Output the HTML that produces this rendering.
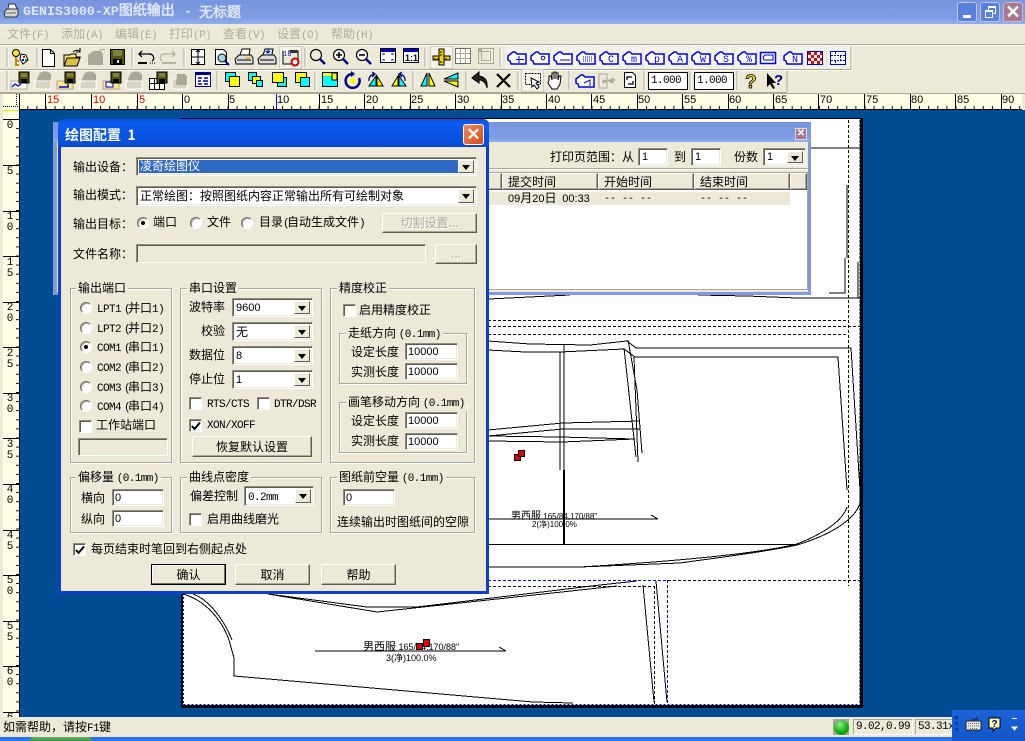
<!DOCTYPE html>
<html><head><meta charset="utf-8">
<style>
html,body{margin:0;padding:0;width:1025px;height:741px;overflow:hidden;background:#ece9d8}
*{box-sizing:border-box}
body{position:relative;font:12px/14px "WenQuanYi Zen Hei","Noto Sans CJK SC",sans-serif;color:#000}
div,span.t,svg.abs{position:absolute}
.t{position:absolute;white-space:nowrap;line-height:14px}
i{font:normal 11px/14px "Liberation Mono",monospace;letter-spacing:-.6px}
u{text-decoration:none;font:normal 11px/14px "Liberation Mono",monospace;letter-spacing:-2.6px}
u.o{margin-left:3px}
b{font:normal 11px/14px "Liberation Sans",sans-serif}
.gr{color:#aca899;text-shadow:1px 1px 0 #fff}
.s{background:#fff;border:1px solid;border-color:#8f8c7c #fff #fff #8f8c7c;box-shadow:inset 1px 1px 0 #5f5d50,inset -1px -1px 0 #ece9d8}
.s.d{background:#ece9d8}
.b{background:#ece9d8;border:1px solid;border-color:#fff #5f5d50 #5f5d50 #fff;box-shadow:inset -1px -1px 0 #aca899;text-align:center}
.g{border:1px solid #aca899;box-shadow:1px 1px 0 #fff,inset 1px 1px 0 #fff}
.l{position:absolute;background:#ece9d8;padding:0 2px;white-space:nowrap;line-height:14px}
.a{position:absolute;right:2px;top:2px;bottom:2px;width:16px;background:#ece9d8;border:1px solid;border-color:#fff #5f5d50 #5f5d50 #fff}
.a:after{content:"";position:absolute;left:3px;top:4px;border:4px solid transparent;border-top:5px solid #000;border-bottom:0}
.r{width:12px;height:12px;border-radius:50%;background:#fff;border:1px solid;border-color:#716f64 #fff #fff #716f64;box-shadow:inset 1px 1px 0 #aca899}
.r.o:after{content:"";position:absolute;left:3px;top:3px;width:4px;height:4px;border-radius:50%;background:#000}
.k{width:13px;height:13px;background:#fff;border:1px solid;border-color:#8f8c7c #fff #fff #8f8c7c;box-shadow:inset 1px 1px 0 #5f5d50}
.v{position:absolute;font:11px/11px "Liberation Mono",monospace;width:10px;text-align:center;left:5px;color:#000}
.h{position:absolute;top:95px;font:11px/11px "Liberation Sans",sans-serif}
.hd{top:173px;height:17px;background:#ece9d8;border:1px solid;border-color:#fff #5f5d50 #5f5d50 #fff;box-shadow:inset -1px -1px 0 #aca899}
</style></head>
<body>
<svg width="0" height="0" style="position:absolute">
<defs>
<pattern id="dith" width="2" height="2" patternUnits="userSpaceOnUse"><rect width="2" height="2" fill="#fff"/><rect width="1" height="1" fill="#ece9d8"/><rect x="1" y="1" width="1" height="1" fill="#ece9d8"/></pattern>
<g id="tag"><path d="M2 10l5-4h2l2 2h9v10H5l-1-3-2-1z" fill="#fff" stroke="#0000e0" stroke-width="1.500"/></g>
<g id="fl"><rect x="10" y="2" width="10" height="11" fill="#555500" stroke="#000"/><rect x="12" y="3" width="6" height="4" fill="#808040"/><rect x="12" y="9" width="6" height="4" fill="#000"/></g>
<g id="dfl"><path d="M6 5a5 3 0 0 1 12 0v11H4V9z" fill="#aca899"/><rect x="2" y="11" width="16" height="8" fill="#d6d3c3" stroke="#fff"/></g>
</defs>
</svg>

<!-- title bar -->
<div style="left:0;top:0;width:1025px;height:24px;background:linear-gradient(#7796dd,#7a97e0 30%,#7f9de4 75%,#92b0ec)"></div>
<svg class="abs" style="left:3px;top:3px" width="16" height="16"><path d="M1 9l3-3h11v6l-2 2H2z" fill="#d8d8d8" stroke="#333"/><path d="M5 6l1-5h6l2 5z" fill="#fff" stroke="#333"/><path d="M2 10h11" stroke="#666"/></svg>
<div class="t" style="left:23px;top:3px;color:#dfe6f6;font:bold 14px/18px 'Liberation Mono','WenQuanYi Zen Hei',monospace"><span style="font-size:13.3px">GENIS3000-XP</span>图纸输出</div>
<div class="t" style="left:184px;top:3px;color:#dfe6f6;font:bold 13.3px/18px 'Liberation Mono',monospace">-</div>
<div class="t" style="left:199px;top:3px;color:#dfe6f6;font:bold 14px/18px 'WenQuanYi Zen Hei',sans-serif">无标题</div>
<div style="left:957px;top:2px;width:20px;height:20px;background:#5a7fdc;border:1px solid #b9c9f0;border-radius:3px"><div style="left:5px;top:12px;width:8px;height:3px;background:#fff"></div></div>
<div style="left:980px;top:2px;width:20px;height:20px;background:#5a7fdc;border:1px solid #b9c9f0;border-radius:3px"><div style="left:7px;top:3px;width:8px;height:8px;border:1px solid #fff;border-top-width:2px"></div><div style="left:4px;top:7px;width:8px;height:8px;border:1px solid #fff;border-top-width:2px;background:#5a7fdc"></div></div>
<div style="left:1003px;top:2px;width:20px;height:20px;background:#a87a90;border:1px solid #d8b8c8;border-radius:3px;color:#fff;font:bold 18px/18px 'Liberation Sans';text-align:center">✕</div>

<!-- menu -->
<div style="left:0;top:24px;width:1025px;height:20px;background:#ece9d8"></div>
<div class="t" style="left:7px;top:27px;color:#b0ad9c">文件<i>(F)</i></div>
<div class="t" style="left:61px;top:27px;color:#b0ad9c">添加<i>(A)</i></div>
<div class="t" style="left:115px;top:27px;color:#b0ad9c">编辑<i>(E)</i></div>
<div class="t" style="left:169px;top:27px;color:#b0ad9c">打印<i>(P)</i></div>
<div class="t" style="left:223px;top:27px;color:#b0ad9c">查看<i>(V)</i></div>
<div class="t" style="left:277px;top:27px;color:#b0ad9c">设置<i>(O)</i></div>
<div class="t" style="left:331px;top:27px;color:#b0ad9c">帮助<i>(H)</i></div>
<div style="left:0;top:44px;width:1025px;height:1px;background:#aca899"></div>
<div style="left:0;top:45px;width:1025px;height:1px;background:#fff"></div>

<!-- toolbars -->
<svg class="abs" style="left:0;top:44px" width="1025" height="50" viewBox="0 44 1025 50">
<path d="M7 48v19M37 48v19M132 48v19M184 48v19M305 48v19M425 48v19M500 48v19M7 71v19M217 71v19M315 71v19M413 71v19M466 71v19M518 71v19M569 71v19M644 71v19M690 71v19M737 71v19" stroke="#aca899" shape-rendering="crispEdges"/>
<path d="M8 48v19M38 48v19M133 48v19M185 48v19M306 48v19M426 48v19M501 48v19M8 71v19M218 71v19M316 71v19M414 71v19M467 71v19M519 71v19M570 71v19M645 71v19M691 71v19M738 71v19" stroke="#fff" shape-rendering="crispEdges"/>
<path d="M0 69.500H851M851 46V69M0 92.500H787M787 70V92" stroke="#aca899" fill="none" shape-rendering="crispEdges"/>
<path d="M0 70.500H851M852 46V70" stroke="#fff" fill="none" shape-rendering="crispEdges"/>
<rect x="279.500" y="46.500" width="22" height="22" fill="url(#dith)" stroke="#cfccbc"/>
<rect x="430.500" y="46.500" width="22" height="22" fill="url(#dith)" stroke="#cfccbc"/>
<rect x="521.500" y="69.500" width="22" height="22" fill="url(#dith)" stroke="#cfccbc"/>
<rect x="505" y="46.500" width="23" height="22" fill="url(#dith)"/><rect x="528" y="46.500" width="22" height="22" fill="url(#dith)"/><rect x="551" y="46.500" width="22" height="22" fill="url(#dith)"/><rect x="574" y="46.500" width="22" height="22" fill="url(#dith)"/><rect x="597" y="46.500" width="22" height="22" fill="url(#dith)"/><rect x="620" y="46.500" width="22" height="22" fill="url(#dith)"/><rect x="643" y="46.500" width="22" height="22" fill="url(#dith)"/><rect x="666" y="46.500" width="22" height="22" fill="url(#dith)"/><rect x="689" y="46.500" width="22" height="22" fill="url(#dith)"/><rect x="712" y="46.500" width="22" height="22" fill="url(#dith)"/><rect x="735" y="46.500" width="22" height="22" fill="url(#dith)"/><rect x="758" y="46.500" width="22" height="22" fill="url(#dith)"/><rect x="781" y="46.500" width="22" height="22" fill="url(#dith)"/><rect x="804" y="46.500" width="22" height="22" fill="url(#dith)"/><rect x="827" y="46.500" width="23" height="22" fill="url(#dith)"/>

<g transform="translate(10,47)"><circle cx="6" cy="6" r="3.500" fill="#ffe040" stroke="#000"/><path d="M6 10v8h3M6 14h3" fill="none" stroke="#b09000" stroke-width="2"/><path d="M11 7l5 1 2 5-5 4-3-5z" fill="#fff" stroke="#000"/><rect x="13" y="9" width="2" height="2" fill="#e00"/><rect x="12" y="12" width="2" height="2" fill="#00c"/><rect x="15" y="12" width="2" height="2" fill="#0a0"/></g>
<path d="M42.500 49.500h8l4 4v13h-12z" fill="#fff" stroke="#000"/><path d="M50.500 49.500v4h4" fill="none" stroke="#000"/>
<g transform="translate(62,47)"><path d="M2 8h6l1-1h5v3h4l-3 9H2z" fill="#ffe880" stroke="#000"/><path d="M2 19l3-8h13l-3 8z" fill="#d8c040" stroke="#000"/><path d="M11 5a5 4 0 0 1 7-1M18 1v4h-4" fill="none" stroke="#000"/></g>
<g transform="translate(86,47)"><path d="M2 8l5-4h8l2 3v11H2z" fill="#aca899"/><path d="M13 4a4 3 0 0 1 6-1" fill="none" stroke="#aca899"/></g>
<g transform="translate(107,47)"><rect x="3.500" y="2.500" width="14" height="15" fill="#555500" stroke="#000"/><rect x="6" y="3" width="9" height="6" fill="#808040"/><rect x="6" y="12" width="9" height="5" fill="#000"/><rect x="10" y="13" width="2" height="3" fill="#ece9d8"/></g>
<g transform="translate(136,47)"><path d="M3 7h9a5 4 0 0 1 4 7M6 4l-3 3 3 3" fill="none" stroke="#000" stroke-width="1.300"/><path d="M2 16h9" stroke="#000" stroke-width="2"/><path d="M14 16h5" stroke="#000" stroke-dasharray="1 1"/></g>
<g transform="translate(159,47)" opacity=".45"><path d="M16 7H7a5 4 0 0 0-4 7M13 4l3 3-3 3" fill="none" stroke="#716f64" stroke-width="1.300"/><path d="M3 16h14" stroke="#716f64" stroke-width="2"/></g>
<g transform="translate(188,47)"><rect x="3.500" y="2.500" width="13" height="15" fill="#fff" stroke="#000"/><path d="M10 3v14M4 10h12" stroke="#000"/><path d="M8 5l2-2 2 2M8 15l2 2 2-2" fill="none" stroke="#000"/></g>
<g transform="translate(211,47)"><path d="M4.500 2.500h8l3 3v12h-11z" fill="#fff" stroke="#000"/><circle cx="11" cy="11" r="4" fill="#9fd8e0" stroke="#000"/><path d="M14 14l4 4" stroke="#000080" stroke-width="2"/></g>
<g transform="translate(234,47)"><path d="M1 12l4-4h12l2 3v6H2z" fill="#ddd" stroke="#000"/><path d="M6 8l2-6h8l-1 6z" fill="#fff" stroke="#000"/><path d="M3 13h14" stroke="#000"/><path d="M12 11h4" stroke="#e0c000" stroke-width="2"/></g>
<g transform="translate(257,47)"><path d="M1 12l4-4h12l2 3v6H2z" fill="#ddd" stroke="#000"/><path d="M6 8l2-6h8l-1 6z" fill="#d0e0ff" stroke="#000"/><path d="M3 13h14" stroke="#000"/><path d="M11 2v4M9 4l2 2 2-2" stroke="#00c" fill="none"/></g>
<g transform="translate(280,47)"><rect x="3" y="4" width="15" height="13" fill="#ece9d8" stroke="#000"/><rect x="3.500" y="3.500" width="5" height="6" fill="#fff"/><text x="3" y="9" font-family="Liberation Mono" font-size="7" fill="#00c">18</text><path d="M10 3h8v3h-8z" fill="#333"/><circle cx="15" cy="15" r="3.500" fill="#fff" stroke="#c00" stroke-width="2"/></g>
<g transform="translate(308,47)"><circle cx="8" cy="8" r="5.500" fill="none" stroke="#000" stroke-width="1.200"/><path d="M12 12l5 5" stroke="#000080" stroke-width="2.500"/></g>
<g transform="translate(331,47)"><circle cx="8" cy="8" r="5.500" fill="#fff" stroke="#000" stroke-width="1.200"/><path d="M5 8h6M8 5v6" stroke="#000" stroke-width="1.600"/><path d="M12 12l5 5" stroke="#000080" stroke-width="2.500"/></g>
<g transform="translate(354,47)"><circle cx="8" cy="8" r="5.500" fill="#fff" stroke="#000" stroke-width="1.200"/><path d="M5 8h6" stroke="#000" stroke-width="1.600"/><path d="M12 12l5 5" stroke="#000080" stroke-width="2.500"/></g>
<g transform="translate(380,48)"><rect x=".5" y=".5" width="15" height="14" fill="#fff" stroke="#000"/><rect x="1" y="1" width="14" height="3" fill="#0000c0"/><path d="M3 7V6h2M11 6h2v1M3 11v1h2M11 12h2v-1" fill="none" stroke="#0000c0"/></g>
<g transform="translate(403,48)"><rect x=".5" y=".5" width="15" height="14" fill="#fff" stroke="#000"/><rect x="1" y="1" width="14" height="3" fill="#0000c0"/><text x="2" y="13" font-family="Liberation Sans" font-size="9" font-weight="bold">1:1</text></g>
<g transform="translate(432,47)"><path d="M1 9h17v4H1z" fill="#f0d000" stroke="#000"/><path d="M7 2h5v16H7z" fill="#f0d000" stroke="#000"/><path d="M3 11v2M6 11v2M14 11v2M8 5h2M8 8h2M8 15h2" stroke="#000"/></g>
<g transform="translate(455,48)"><rect x=".5" y=".5" width="15" height="15" fill="#fff" stroke="#716f64"/><path d="M5.500 1v14M10.500 1v14M1 5.500h14M1 10.500h14" stroke="#aca899"/></g>
<g transform="translate(478,48)"><rect x=".5" y=".5" width="15" height="15" fill="none" stroke="#aca899"/><rect x="3.500" y="3.500" width="9" height="9" fill="none" stroke="#aca899"/><rect x="1" y="1" width="3" height="3" fill="#aca899"/></g>

<g transform="translate(506,46)"><use href="#tag"/><path d="M13 10v7M10 13.500h8" stroke="#0000e0"/></g>
<g transform="translate(529,46)"><use href="#tag"/><circle cx="14" cy="12" r="1.800" fill="none" stroke="#0000e0"/></g>
<g transform="translate(552,46)"><use href="#tag"/><path d="M8 14h10" stroke="#0000e0"/></g>
<g transform="translate(575,46)"><use href="#tag"/><path d="M8 11h10M8 13h10M8 15h10" stroke="#0000e0" stroke-dasharray="1 1"/></g>
<g transform="translate(598,46)" font-family="Liberation Mono" font-size="10" fill="#0000e0"><use href="#tag"/><text x="10" y="16">C</text></g>
<g transform="translate(621,46)" font-family="Liberation Mono" font-size="10" fill="#0000e0"><use href="#tag"/><text x="10" y="16">m</text></g>
<g transform="translate(644,46)" font-family="Liberation Mono" font-size="10" fill="#0000e0"><use href="#tag"/><text x="10" y="16">p</text></g>
<g transform="translate(667,46)" font-family="Liberation Mono" font-size="10" fill="#0000e0"><use href="#tag"/><text x="10" y="16">A</text></g>
<g transform="translate(690,46)" font-family="Liberation Mono" font-size="10" fill="#0000e0"><use href="#tag"/><text x="10" y="16">W</text></g>
<g transform="translate(713,46)" font-family="Liberation Mono" font-size="10" fill="#0000e0"><use href="#tag"/><text x="10" y="16">S</text></g>
<g transform="translate(736,46)" font-family="Liberation Mono" font-size="10" fill="#0000e0"><use href="#tag"/><text x="10" y="16">%</text></g>
<g transform="translate(759,46)"><rect x="1.500" y="6.500" width="15" height="11" fill="#fff" stroke="#0000e0" stroke-width="1.500"/><path d="M4 11l2-2h8v5H5z" fill="none" stroke="#0000e0"/></g>
<g transform="translate(782,46)" font-family="Liberation Mono" font-size="10" fill="#0000e0"><use href="#tag"/><text x="10" y="16">N</text></g>
<g transform="translate(807,51)"><rect x=".5" y=".5" width="15" height="13" fill="#fff" stroke="#0000c0"/><path d="M1 1h3v3H1zM7 1h3v3H7zM13 1h2v3h-2zM4 4h3v3H4zM10 4h3v3h-3zM1 7h3v3H1zM7 7h3v3H7zM13 7h2v3h-2zM4 10h3v3H4zM10 10h3v3h-3z" fill="#e00000"/></g>
<g transform="translate(830,51)"><rect x=".5" y=".5" width="15" height="13" fill="#fff" stroke="#0000c0"/><path d="M1 4.500h14M1 9.500h14M5.500 1v3M10.500 5v4M5.500 10v3" stroke="#0000c0" stroke-dasharray="2 1"/></g>

<g transform="translate(9,70)"><rect x="2" y="11" width="16" height="8" fill="#fff" stroke="#aca899"/><path d="M3 17l3-3 3 2 3-2" fill="none" stroke="#0000e0" stroke-width="1.300"/><use href="#fl"/></g>
<g transform="translate(33,70)"><use href="#dfl"/></g>
<g transform="translate(55,70)"><rect x="2" y="11" width="16" height="8" fill="#ffe880" stroke="#aca899"/><path d="M4 17h9v-3" fill="none" stroke="#0000e0" stroke-width="1.500"/><use href="#fl"/></g>
<g transform="translate(78,70)"><use href="#dfl"/></g>
<g transform="translate(101,70)"><rect x="2" y="11" width="16" height="8" fill="#ffe880" stroke="#aca899"/><rect x="5" y="12" width="7" height="5" fill="#fff" stroke="#0000e0"/><use href="#fl"/></g>
<g transform="translate(124,70)"><use href="#dfl"/></g>
<g transform="translate(147,70)"><rect x="2.500" y="8.500" width="15" height="11" fill="#fff" stroke="#000"/><path d="M7.500 9v10M12.500 9v10M3 13.500h14" stroke="#000"/><use href="#fl"/></g>
<g transform="translate(170,70)"><rect x="2" y="9" width="15" height="10" fill="#d6d3c3" stroke="#fff"/><path d="M7 4h8l2 3v8H6z" fill="#aca899"/></g>
<g transform="translate(195,72)"><rect x=".5" y=".5" width="15" height="14" fill="#fff" stroke="#000080"/><path d="M1 1h14v2H1z" fill="#000080"/><path d="M3 6h4M9 6h4M3 9h3M8 9h5M3 12h4M9 12h4" stroke="#0000c0" stroke-width="1.500"/></g>
<g transform="translate(224,71)"><rect x="1.500" y="1.500" width="10" height="9" fill="#00ffff" stroke="#000"/><rect x="5.500" y="5.500" width="10" height="10" fill="#ffff00" stroke="#000"/></g>
<g transform="translate(247,71)"><rect x="1.500" y="1.500" width="8" height="8" fill="#00ffff" stroke="#000"/><rect x="5.500" y="5.500" width="8" height="7" fill="#ffff00" stroke="#000"/><rect x="9.500" y="9.500" width="6" height="6" fill="#00ffff" stroke="#000"/></g>
<g transform="translate(271,71)"><rect x="6.500" y="6.500" width="9" height="9" fill="#00ffff" stroke="#000"/><rect x="1.500" y="1.500" width="11" height="10" fill="#ffff00" stroke="#000"/></g>
<g transform="translate(294,71)"><rect x="1.500" y="1.500" width="11" height="10" fill="#ffff00" stroke="#000"/><rect x="6.500" y="6.500" width="9" height="9" fill="#00ffff" stroke="#000"/></g>
<g transform="translate(322,72)"><rect x=".5" y=".5" width="15" height="14" fill="#00ffff" stroke="#000"/><rect x="1" y="1" width="14" height="3" fill="#ffff00"/><rect x="10" y="1" width="5" height="7" fill="#ffff00" stroke="#000"/></g>
<g transform="translate(343,70)"><path d="M11 4a7 7 0 1 0 5 4" fill="none" stroke="#000080" stroke-width="2.500"/><path d="M8 1l4 3-4 3z" fill="#000080"/><circle cx="10" cy="11" r="3" fill="#ffff00"/></g>
<g transform="translate(366,70)"><path d="M10 6L3 16h7z" fill="#00ffff" stroke="#000"/><path d="M11 6l6 10h-6z" fill="#ffff00" stroke="#000"/><path d="M3 11a6 6 0 0 1 6-7M6 2l3 2-3 3" fill="none" stroke="#000080" stroke-width="1.300"/></g>
<g transform="translate(389,70)"><path d="M9 6L3 16h6z" fill="#ffff00" stroke="#000"/><path d="M10 6l7 10h-7z" fill="#00ffff" stroke="#000"/><path d="M16 11a6 6 0 0 0-6-7M13 2l-3 2 3 3" fill="none" stroke="#000080" stroke-width="1.300"/></g>
<g transform="translate(418,70)"><path d="M9 3L3 16h6z" fill="#00ffff" stroke="#000"/><path d="M11 3l6 13h-6z" fill="#ffff00" stroke="#000"/></g>
<g transform="translate(441,70)"><path d="M17 3L3 9h14z" fill="#00ffff" stroke="#000"/><path d="M17 11H3l14 6z" fill="#ffff00" stroke="#000"/></g>
<path d="M479 72l-7 6 7 5v-3c4 0 7 3 8 8 1-7-2-11-8-12z" fill="#222" stroke="#000"/>
<path d="M497 74l13 13M510 74l-13 13" stroke="#000" stroke-width="2.200"/>
<g transform="translate(522,70)"><rect x="3.500" y="3.500" width="15" height="11" fill="none" stroke="#000" stroke-dasharray="2 1"/><path d="M9 8l8 4-3 1 3 4-2 2-3-4-2 2z" fill="#fff" stroke="#000"/></g>
<g transform="translate(545,70)"><path d="M4 10V6l2 0 1 4V3h2v6V2h2v7V3h2v7l1-4h2l-1 8-3 5H7L3 13z" fill="#fff" stroke="#000"/></g>
<g transform="translate(574,69)"><use href="#tag"/><path d="M10 14l6-3v6" fill="none" stroke="#0000e0"/></g>
<g transform="translate(597,70)" stroke="#aca899" fill="none"><path d="M2 4h8v14H2zM11 10h8"/><path d="M6 10l4 1-4 2zM16 8l-4 3 4 2z" fill="#aca899"/></g>
<g transform="translate(620,70)"><path d="M4.500 2.500h8l3 3v12h-11z" fill="#fff" stroke="#000"/><path d="M12 7H7v3M8 14h5v-3" fill="none" stroke="#000" stroke-width="1.300"/></g>
<text x="745" y="88" font-family="Liberation Sans" font-size="19" font-weight="bold" fill="#f0e000" stroke="#000" stroke-width=".8">?</text>
<path d="M767 73v14l3-3 3 5 2-1-3-5h4z" fill="#000"/>
<text x="774" y="85" font-family="Liberation Sans" font-size="15" font-weight="bold" fill="#000080">?</text>
</svg>
<div style="left:648px;top:72px;width:40px;height:18px;background:#fff;border:1px solid #000;font:11px/16px 'Liberation Mono',monospace;padding-left:2px;letter-spacing:-.6px">1.000</div>
<div style="left:694px;top:72px;width:40px;height:18px;background:#fff;border:1px solid #000;font:11px/16px 'Liberation Mono',monospace;padding-left:2px;letter-spacing:-.6px">1.000</div>

<!-- rulers -->
<div style="left:3px;top:94px;width:1019px;height:16px;background:#ffffe6"></div>
<div style="left:3px;top:110px;width:16px;height:607px;background:#ffffe6"></div>
<div style="left:0;top:93px;width:1025px;height:1px;background:#aca899"></div>
<div style="left:20px;top:110px;width:1005px;height:607px;background:#004b92"></div>
<svg class="abs" style="left:0;top:93px" width="1025" height="624" viewBox="0 93 1025 624" shape-rendering="crispEdges">
<defs>
<pattern id="hm" x="0" y="106" width="9.1" height="4" patternUnits="userSpaceOnUse"><rect x="0" width="1" height="4"/></pattern>
<pattern id="vm" x="16" y="119" width="4" height="9.1" patternUnits="userSpaceOnUse"><rect y="0" width="4" height="1"/></pattern>
</defs>
<rect x="19" y="106" width="1003" height="4" fill="url(#hm)"/>
<rect x="16" y="110" width="3" height="607" fill="url(#vm)"/>
<path d="M45.500 94v15M91.500 94v15M137.500 94v15M182.500 94v15M228.500 94v15M319.500 94v15M364.500 94v15M410.500 94v15M455.500 94v15M501.500 94v15M546.500 94v15M591.500 94v15M637.500 94v15M682.500 94v15M728.500 94v15M773.500 94v15M818.500 94v15M864.500 94v15M910.500 94v15M955.500 94v15M1001.500 94v15" stroke="#000"/>
<path d="M276.500 94v16" stroke="#0000e0"/>
<path d="M19 109.500H1022M19.500 94V717" stroke="#000"/>
<path d="M3 119.500h16M3 165.500h16M3 211.500h16M3 256.500h16M3 302.500h16M3 347.500h16M3 393.500h16M3 438.500h16M3 484.500h16M3 530.500h16M3 575.500h16M3 621.500h16M3 666.500h16M3 712.500h16" stroke="#000"/>
<path d="M3 106.500h16M16.500 94v12" stroke="#000" stroke-dasharray="1 1"/>
<path d="M3 110.500h16" stroke="#f0f000"/>
</svg>
<span class="h" style="left:47px;color:#e00000">15</span><span class="h" style="left:93px;color:#e00000">10</span><span class="h" style="left:139px;color:#e00000">5</span>
<span class="h" style="left:184px">0</span><span class="h" style="left:229px">5</span><span class="h" style="left:277px">10</span><span class="h" style="left:321px">15</span><span class="h" style="left:366px">20</span><span class="h" style="left:411px">25</span><span class="h" style="left:457px">30</span><span class="h" style="left:502px">35</span><span class="h" style="left:548px">40</span><span class="h" style="left:593px">45</span><span class="h" style="left:638px">50</span><span class="h" style="left:684px">55</span><span class="h" style="left:729px">60</span><span class="h" style="left:775px">65</span><span class="h" style="left:820px">70</span><span class="h" style="left:866px">75</span><span class="h" style="left:911px">80</span><span class="h" style="left:957px">85</span><span class="h" style="left:1002px">90</span>
<span class="v" style="top:121px">0</span><span class="v" style="top:167px">5</span><span class="v" style="top:212px">1<br>0</span><span class="v" style="top:258px">1<br>5</span><span class="v" style="top:303px">2<br>0</span><span class="v" style="top:349px">2<br>5</span><span class="v" style="top:394px">3<br>0</span><span class="v" style="top:440px">3<br>5</span><span class="v" style="top:485px">4<br>0</span><span class="v" style="top:531px">4<br>5</span><span class="v" style="top:576px">5<br>0</span><span class="v" style="top:622px">5<br>5</span><span class="v" style="top:667px">6<br>0</span><span class="v" style="top:713px">6</span>

<!-- paper -->
<div style="left:181px;top:118px;width:682px;height:590px;background:#fff;border:2px solid #000;border-top-width:1px;border-right-width:3px;border-bottom-width:3px"></div>
<svg class="abs" style="left:0;top:0" width="1025" height="741" fill="none" stroke="#000" shape-rendering="crispEdges">
<path d="M183.500 121V704M183.500 704.500H860" stroke="#0000e0" stroke-dasharray="2 2"/>
<path d="M860.500 120V706" stroke="#000" stroke-dasharray="3 1" stroke-width="2"/>
<path d="M848.500 120V580M488 320.500H848M488 326.500H862M488 334.500H848M668 580.500H862M488 586.500H655M654.500 586V704M848.500 580V586" stroke-dasharray="3 2"/>
<path d="M488 580.500H668M667.500 580V704" stroke="#0000e0" stroke-dasharray="3 2"/>
<path d="M808 148H860M847 185V258M845 258V293H829M858 262V298M698 295L747 296 797 298H860M489 299L570 295"/>
<path d="M488 341L530 344 590 345 627 341 636 348H851L860 490M488 350L525 352 560 352 624 349 635 357V357H838L847 490"/>
<path d="M564 344V544M560 352V470"/>
<path d="M564 470V544" stroke-width="2"/>
<path d="M624 348L636 457M628 340L637 390 642 453M634 357L638 462"/>
<path d="M488 430L563 423 640 421M488 436L563 429 640 429M488 436L560 437 635 439M488 441L562 442 635 439"/>
<path d="M488 519H658M651 515L658 519"/>
<path d="M488 544.500H797M488 567H580L680 563"/>
<path d="M847 507C843 520 825 533 797 544 760 553 680 561 580 567M860 490V503C855 520 830 535 797 545 760 553 700 560 680 563"/>
<path d="M268 594L367 607H417L600 585 637 581M268 594L377 612 617 586"/>
<path d="M183 594C205 600 222 620 229 640L234 658V676L533 702 573 703M193 594C210 600 225 622 232 640"/>
<path d="M643 585L654 702M656 581L667 702"/>
<path d="M315 651H506M499 647L506 651"/>
</svg>
<span class="t" style="left:511px;top:508px;font-size:10px">男西服 <b style="font-size:8px">165/84,170/88"</b></span>
<span class="t" style="left:532px;top:517px;font-size:9px"><b style="font-size:8px">2(净)100.0%</b></span>
<span class="t" style="left:363px;top:639px;font-size:11px">男西服 <b style="font-size:9px">165/84,170/88"</b></span>
<span class="t" style="left:386px;top:650px"><b style="font-size:9px">3(净)100.0%</b></span>
<div style="left:514px;top:454px;width:7px;height:7px;background:#e00000;border:1px solid #000"></div>
<div style="left:518px;top:450px;width:7px;height:7px;background:#e00000;border:1px solid #000"></div>
<div style="left:416px;top:643px;width:7px;height:7px;background:#e00000;border:1px solid #000"></div>
<div style="left:423px;top:639px;width:7px;height:8px;background:#e00000;border:1px solid #000"></div>

<!-- back window -->
<div style="left:53px;top:122px;width:758px;height:173px;background:#7f9ae2;border-radius:3px 3px 0 0"></div>
<div style="left:53px;top:122px;width:758px;height:20px;background:linear-gradient(#7796dd,#7f9de4 80%,#92b0ec)"></div>
<div style="left:795px;top:128px;width:12px;height:12px;background:#a87a90;border:1px solid #d8d8e8;color:#fff;font:bold 10px/10px 'Liberation Sans';text-align:center">✕</div>
<div style="left:57px;top:142px;width:751px;height:150px;background:#ece9d8"></div>
<div style="left:488px;top:168px;width:320px;height:1px;background:#aca899"></div>
<div style="left:488px;top:169px;width:320px;height:1px;background:#fff"></div>
<span class="t" style="left:550px;top:150px">打印页范围&#65306;从</span>
<div class="s" style="left:638px;top:148px;width:30px;height:18px"><b style="position:absolute;left:3px;top:1px">1</b></div>
<span class="t" style="left:674px;top:150px">到</span>
<div class="s" style="left:691px;top:148px;width:30px;height:18px"><b style="position:absolute;left:3px;top:1px">1</b></div>
<span class="t" style="left:734px;top:150px">份数</span>
<div class="s" style="left:763px;top:148px;width:43px;height:18px"><b style="position:absolute;left:3px;top:1px">1</b><div class="a"></div></div>
<div style="left:488px;top:172px;width:320px;height:118px;background:#fff;border:1px solid #aca899;border-left:0"></div>
<div class="hd" style="left:488px;width:14px"></div>
<div class="hd" style="left:502px;width:96px"></div>
<div class="hd" style="left:598px;width:96px"></div>
<div class="hd" style="left:694px;width:96px"></div>
<div class="hd" style="left:790px;width:17px"></div>
<span class="t" style="left:508px;top:175px">提交时间</span><span class="t" style="left:604px;top:175px">开始时间</span><span class="t" style="left:700px;top:175px">结束时间</span>
<div style="left:488px;top:192px;width:302px;height:13px;background:#ece9d8"></div>
<span class="t" style="left:508px;top:191px"><b>09</b>月<b>20</b>日 <b>&nbsp;00:33</b></span>
<span class="t" style="left:604px;top:193px;font:10px/14px 'Liberation Mono',monospace">-- -- --</span>
<span class="t" style="left:700px;top:193px;font:10px/14px 'Liberation Mono',monospace">-- -- --</span>

<!-- dialog -->
<div style="left:58px;top:119px;width:431px;height:475px;background:#0a3fd0;border-radius:6px 6px 0 0"></div>
<div style="left:58px;top:119px;width:431px;height:28px;background:linear-gradient(#0a50d8,#0c5cf0 15%,#0a54e4 60%,#0a4ad0);border-radius:6px 6px 0 0"></div>
<div style="left:61px;top:147px;width:425px;height:444px;background:#ece9d8"></div>
<span class="t" style="left:65px;top:127px;color:#fff;font-size:14px;line-height:16px;font-weight:bold">绘图配置 &nbsp;1</span>
<div style="left:463px;top:124px;width:21px;height:21px;background:linear-gradient(135deg,#ee8a60,#d84a18);border:1px solid #fff;border-radius:3px;color:#fff;font:bold 17px/19px 'Liberation Sans';text-align:center">✕</div>

<span class="t" style="left:73px;top:160px">输出设备&#65306;</span>
<div class="s" style="left:136px;top:157px;width:341px;height:19px"><div style="left:2px;top:2px;width:319px;height:13px;background:#316ac5"></div><span class="t" style="left:3px;top:1px;color:#fff">凌奇绘图仪</span><div class="a"></div></div>
<span class="t" style="left:73px;top:188px">输出模式&#65306;</span>
<div class="s" style="left:136px;top:186px;width:341px;height:20px"><span class="t" style="left:3px;top:2px">正常绘图&#65306;按照图纸内容正常输出所有可绘制对象</span><div class="a"></div></div>
<span class="t" style="left:73px;top:217px">输出目标&#65306;</span>
<div class="r o" style="left:137px;top:217px"></div><span class="t" style="left:153px;top:215px">端口</span>
<div class="r" style="left:190px;top:217px"></div><span class="t" style="left:207px;top:215px">文件</span>
<div class="r" style="left:241px;top:217px"></div><span class="t" style="left:259px;top:215px">目录<u>(</u>自动生成文件<u>)</u></span>
<div class="b gr" style="left:382px;top:213px;width:95px;height:20px;line-height:18px">切割设置...</div>
<span class="t" style="left:73px;top:247px">文件名称&#65306;</span>
<div class="s d" style="left:136px;top:244px;width:290px;height:19px"></div>
<div class="b gr" style="left:435px;top:244px;width:42px;height:20px;line-height:18px">...</div>

<!-- 输出端口 -->
<div class="g" style="left:70px;top:288px;width:102px;height:175px"></div>
<span class="l" style="left:76px;top:281px">输出端口</span>
<div class="r" style="left:80px;top:302px"></div><span class="t" style="left:97px;top:301px"><i>LPT1</i><u class="o">(</u>并口<i>1</i><u>)</u></span>
<div class="r" style="left:80px;top:322px"></div><span class="t" style="left:97px;top:321px"><i>LPT2</i><u class="o">(</u>并口<i>2</i><u>)</u></span>
<div class="r o" style="left:80px;top:341px"></div><span class="t" style="left:97px;top:340px"><i>COM1</i><u class="o">(</u>串口<i>1</i><u>)</u></span>
<div class="r" style="left:80px;top:361px"></div><span class="t" style="left:97px;top:360px"><i>COM2</i><u class="o">(</u>串口<i>2</i><u>)</u></span>
<div class="r" style="left:80px;top:381px"></div><span class="t" style="left:97px;top:380px"><i>COM3</i><u class="o">(</u>串口<i>3</i><u>)</u></span>
<div class="r" style="left:80px;top:400px"></div><span class="t" style="left:97px;top:399px"><i>COM4</i><u class="o">(</u>串口<i>4</i><u>)</u></span>
<div class="k" style="left:79px;top:420px"></div><span class="t" style="left:96px;top:418px">工作站端口</span>
<div class="s d" style="left:78px;top:438px;width:90px;height:18px"></div>

<!-- 串口设置 -->
<div class="g" style="left:180px;top:288px;width:142px;height:175px"></div>
<span class="l" style="left:187px;top:281px">串口设置</span>
<span class="t" style="left:189px;top:300px">波特率</span>
<div class="s" style="left:232px;top:298px;width:81px;height:19px"><b style="position:absolute;left:3px;top:2px">9600</b><div class="a"></div></div>
<span class="t" style="left:201px;top:324px">校验</span>
<div class="s" style="left:232px;top:322px;width:81px;height:19px"><span class="t" style="left:3px;top:2px">无</span><div class="a"></div></div>
<span class="t" style="left:189px;top:348px">数据位</span>
<div class="s" style="left:232px;top:346px;width:81px;height:19px"><b style="position:absolute;left:3px;top:2px">8</b><div class="a"></div></div>
<span class="t" style="left:189px;top:372px">停止位</span>
<div class="s" style="left:232px;top:370px;width:81px;height:19px"><b style="position:absolute;left:3px;top:2px">1</b><div class="a"></div></div>
<div class="k" style="left:189px;top:397px"></div><span class="t" style="left:207px;top:396px"><i>RTS/CTS</i></span>
<div class="k" style="left:257px;top:397px"></div><span class="t" style="left:274px;top:396px"><i>DTR/DSR</i></span>
<div class="k" style="left:189px;top:419px"><svg class="abs" style="left:1px;top:1px" width="10" height="10"><path d="M1 5l2.500 3L9 1.500" fill="none" stroke="#000" stroke-width="2"/></svg></div><span class="t" style="left:207px;top:417px"><i>XON/XOFF</i></span>
<div class="b" style="left:192px;top:436px;width:120px;height:21px;line-height:19px">恢复默认设置</div>

<!-- 精度校正 -->
<div class="g" style="left:330px;top:288px;width:145px;height:175px"></div>
<span class="l" style="left:337px;top:281px">精度校正</span>
<div class="k" style="left:343px;top:304px"></div><span class="t" style="left:359px;top:303px">启用精度校正</span>
<div class="g" style="left:339px;top:333px;width:128px;height:51px"></div>
<span class="l" style="left:346px;top:326px">走纸方向 <i>(0.1mm)</i></span>
<span class="t" style="left:351px;top:345px">设定长度</span>
<div class="s" style="left:405px;top:343px;width:53px;height:17px"><b style="position:absolute;left:2px;top:1px">10000</b></div>
<span class="t" style="left:351px;top:365px">实测长度</span>
<div class="s" style="left:405px;top:363px;width:53px;height:17px"><b style="position:absolute;left:2px;top:1px">10000</b></div>
<div class="g" style="left:339px;top:402px;width:128px;height:51px"></div>
<span class="l" style="left:346px;top:395px">画笔移动方向 <i>(0.1mm)</i></span>
<span class="t" style="left:351px;top:414px">设定长度</span>
<div class="s" style="left:405px;top:412px;width:53px;height:17px"><b style="position:absolute;left:2px;top:1px">10000</b></div>
<span class="t" style="left:351px;top:434px">实测长度</span>
<div class="s" style="left:405px;top:433px;width:53px;height:17px"><b style="position:absolute;left:2px;top:1px">10000</b></div>

<!-- bottom groups -->
<div class="g" style="left:70px;top:477px;width:102px;height:56px"></div>
<span class="l" style="left:76px;top:470px">偏移量 <i>(0.1mm)</i></span>
<span class="t" style="left:81px;top:491px">横向</span>
<div class="s" style="left:112px;top:489px;width:52px;height:17px"><b style="position:absolute;left:2px;top:1px">0</b></div>
<span class="t" style="left:81px;top:512px">纵向</span>
<div class="s" style="left:112px;top:510px;width:52px;height:17px"><b style="position:absolute;left:2px;top:1px">0</b></div>
<div class="g" style="left:180px;top:477px;width:142px;height:56px"></div>
<span class="l" style="left:187px;top:470px">曲线点密度</span>
<span class="t" style="left:190px;top:489px">偏差控制</span>
<div class="s" style="left:244px;top:486px;width:70px;height:20px"><span class="t" style="left:3px;top:2px"><i>0.2mm</i></span><div class="a"></div></div>
<div class="k" style="left:189px;top:513px"></div><span class="t" style="left:207px;top:512px">启用曲线磨光</span>
<div class="g" style="left:330px;top:477px;width:145px;height:56px"></div>
<span class="l" style="left:337px;top:470px">图纸前空量 <i>(0.1mm)</i></span>
<div class="s" style="left:343px;top:489px;width:52px;height:17px"><b style="position:absolute;left:2px;top:1px">0</b></div>
<span class="t" style="left:337px;top:515px">连续输出时图纸间的空隙</span>

<div class="k" style="left:73px;top:543px"><svg class="abs" style="left:1px;top:1px" width="10" height="10"><path d="M1 5l2.500 3L9 1.500" fill="none" stroke="#000" stroke-width="2"/></svg></div>
<span class="t" style="left:91px;top:542px">每页结束时笔回到右侧起点处</span>
<div class="b" style="left:151px;top:564px;width:75px;height:21px;line-height:19px;border-color:#000;box-shadow:inset -1px -1px 0 #716f64,inset 1px 1px 0 #fff">确认</div>
<div class="b" style="left:235px;top:564px;width:75px;height:21px;line-height:19px">取消</div>
<div class="b" style="left:321px;top:564px;width:75px;height:21px;line-height:19px">帮助</div>

<!-- status -->
<div style="left:0;top:717px;width:1025px;height:20px;background:#ece9d8"></div>
<span class="t" style="left:3px;top:720px">如需帮助&#65292;请按<i>F1</i>键</span>
<div style="left:833px;top:719px;width:16px;height:16px;background:#aca899"></div>
<div style="left:834px;top:720px;width:15px;height:15px;border-radius:50%;background:radial-gradient(circle at 40% 30%,#8ff08f,#10b010 55%,#067006)"></div>
<div style="left:853px;top:719px;width:60px;height:16px;border:1px solid;border-color:#aca899 #fff #fff #aca899;font:11px/14px 'Liberation Mono',monospace;letter-spacing:-.6px;padding-left:2px">9.02,0.99</div>
<div style="left:915px;top:719px;width:40px;height:16px;border:1px solid;border-color:#aca899 #fff #fff #aca899;font:11px/14px 'Liberation Mono',monospace;letter-spacing:-.6px;padding-left:2px;overflow:hidden">53.31x</div>
<div style="left:0;top:737px;width:1025px;height:4px;background:linear-gradient(#2a6de8,#2f7af5)"></div>
<div style="left:30px;top:737px;width:62px;height:4px;background:linear-gradient(#6fae6f,#3f963f);border-radius:4px 4px 0 0"></div>
<div style="left:952px;top:710px;width:73px;height:31px;background:linear-gradient(#1a62d8,#1256c8)"></div>
<div style="left:955px;top:716px;width:3px;height:16px;background:repeating-linear-gradient(#0a3aa0 0 3px,transparent 3px 6px)"></div>
<svg class="abs" style="left:965px;top:716px" width="60" height="20"><rect x="1" y="5" width="15" height="9" rx="1" fill="#e8e8e0" stroke="#222"/><path d="M3 7.500h11M3 10h11M5 12.500h7" stroke="#666" stroke-dasharray="1 1"/><path d="M8 5V3h4V1" stroke="#222" fill="none"/><path d="M24 2h11v10h-4l-3 3v-3h-4z" fill="#ffffb0" stroke="#000"/><text x="26.500" y="11" font-family="Liberation Sans" font-size="10" font-weight="bold" fill="#000080">?</text><path d="M47 2.500h5M47 11l2.500 3 2.500-3z" fill="#fff" stroke="#fff"/></svg>
</body></html>
